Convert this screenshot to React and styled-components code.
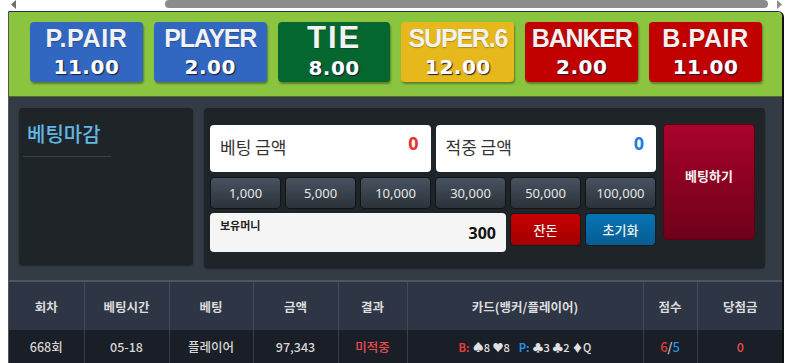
import React from "react";
import styled, { createGlobalStyle } from "styled-components";

const GlobalStyle = createGlobalStyle`
	html, body {
		margin: 0;
		padding: 0;
		background: #fff;
		font-family: "Noto Sans CJK KR", "Noto Sans", sans-serif;
	}
	* { box-sizing: border-box; }
`;

const bets = [
	{ label: "P.PAIR", odds: "11.00", color: "#3166c1", wide: true },
	{ label: "PLAYER", odds: "2.00", color: "#3166c1" },
	{ label: "TIE", odds: "8.00", color: "#04672f", big: true },
	{ label: "SUPER.6", odds: "12.00", color: "#e7b81b" },
	{ label: "BANKER", odds: "2.00", color: "#c10000" },
	{ label: "B.PAIR", odds: "11.00", color: "#c10000", wide: true },
];

const chips = ["1,000", "5,000", "10,000", "30,000", "50,000", "100,000"];

const columns = [
	{ title: "회차", width: 75 },
	{ title: "베팅시간", width: 85 },
	{ title: "베팅", width: 84 },
	{ title: "금액", width: 85 },
	{ title: "결과", width: 69 },
	{ title: "카드(뱅커/플레이어)", width: 236 },
	{ title: "점수", width: 54 },
	{ title: "당첨금", width: 86 },
];

function App() {
	return (
		<>
			<GlobalStyle />
			<ScrollBar>
				<Arrow width="5" height="9" viewBox="0 0 5 9">
					<path d="M5 0 L0 4.5 L5 9 Z" fill="#6f6f6f" />
				</Arrow>
				<Thumb />
				<Arrow width="5" height="9" viewBox="0 0 5 9">
					<path d="M0 0 L5 4.5 L0 9 Z" fill="#8f8f8f" />
				</Arrow>
			</ScrollBar>
			<Frame>
				<BetBar>
					{bets.map((b) => (
						<BetButton key={b.label} $color={b.color}>
							<BetLabel $big={b.big} $wide={b.wide}>
								{b.label}
							</BetLabel>
							<BetOdds>{b.odds}</BetOdds>
						</BetButton>
					))}
				</BetBar>

				<Panel>
					<StatusCard>
						<StatusTitle>베팅마감</StatusTitle>
					</StatusCard>
					<BetCard>
						<Controls>
							<AmountRow>
								<AmountBox>
									<AmountLabel>베팅 금액</AmountLabel>
									<AmountValue $color="#e8312b">0</AmountValue>
								</AmountBox>
								<AmountBox>
									<AmountLabel>적중 금액</AmountLabel>
									<AmountValue $color="#1f7ce0">0</AmountValue>
								</AmountBox>
							</AmountRow>
							<ChipRow>
								{chips.map((c) => (
									<Chip key={c}>{c}</Chip>
								))}
							</ChipRow>
							<MoneyRow>
								<MoneyBox>
									<MoneyLabel>보유머니</MoneyLabel>
									<MoneyValue>300</MoneyValue>
								</MoneyBox>
								<ActionButton $from="#c80000" $to="#a00000">잔돈</ActionButton>
								<ActionButton $from="#0874b3" $to="#055d92">초기화</ActionButton>
							</MoneyRow>
						</Controls>
						<SubmitButton>베팅하기</SubmitButton>
					</BetCard>
				</Panel>

				<Table>
					<thead>
						<tr>
							{columns.map((c) => (
								<Th key={c.title} style={{ width: c.width }}>
									{c.title}
								</Th>
							))}
						</tr>
					</thead>
					<tbody>
						<tr>
							<Td>668회</Td>
							<Td>05-18</Td>
							<Td>플레이어</Td>
							<Td>97,343</Td>
							<Td $color="#ea4b4b">미적중</Td>
							<Td>
								<Cards>
									<Side $color="#e23b3b">B:</Side>
									<span>♠8 ♥8</span>
									<Side $color="#2a8fe0" $gap>P:</Side>
									<span>♣3 ♣2 ♦Q</span>
								</Cards>
							</Td>
							<Td>
								<Score $color="#e23b3b">6</Score>/
								<Score $color="#2a8fe0">5</Score>
							</Td>
							<Td $color="#ea4b4b">0</Td>
						</tr>
					</tbody>
				</Table>
			</Frame>
		</>
	);
}

export default App;

const ScrollBar = styled.div`
	display: flex;
	align-items: flex-start;
	height: 11px;
	padding: 0 18px 0 11px;
`;
const Arrow = styled.svg`
	flex: none;
	display: block;
`;
const Thumb = styled.span`
	height: 8px;
	margin: 0 9px 0 149px;
	flex: 1;
	background: #8c8c8c;
	border-radius: 4px;
`;

const Frame = styled.div`
	margin-left: 8px;
	width: 776px;
	border-top: 1px solid #2a2a55;
	border-left: 1px solid #555;
	border-right: 2px solid #111;
	border-top-right-radius: 6px;
	overflow: hidden;
`;

const BetBar = styled.div`
	display: flex;
	gap: 11px;
	height: 85px;
	padding: 10px 20px 0 21px;
	background: #8bc53f;
	border-bottom: 1px solid #4d6a2b;
`;
const BetButton = styled.div`
	width: 113px;
	height: 60px;
	border-radius: 4px;
	background: ${(p) => p.$color};
	box-shadow: 1px 2px 2px rgba(0, 0, 0, 0.35);
	display: flex;
	flex-direction: column;
	align-items: center;
	color: #fff;
`;
const BetLabel = styled.div`
	font-family: "Liberation Sans", Arial, sans-serif;
	font-weight: bold;
	font-size: ${(p) => (p.$big ? "31px" : "25px")};
	letter-spacing: ${(p) => (p.$big ? "2px" : p.$wide ? "0.6px" : "-1.2px")};
	line-height: ${(p) => (p.$big ? "32px" : "30px")};
	margin-top: ${(p) => (p.$big ? "0" : "1px")};
	color: #f2f2f2;
	text-shadow: 0 1px 1px rgba(0, 0, 0, 0.25);
`;
const BetOdds = styled.div`
	font-family: "DejaVu Sans", Verdana, sans-serif;
	font-weight: bold;
	font-size: 20px;
	line-height: 24px;
	letter-spacing: 0.5px;
	margin-top: 2px;
	color: #fff;
	text-shadow: 1px 1px 1px #1a1a3a;
`;

const Panel = styled.div`
	display: flex;
	gap: 11px;
	height: 183px;
	padding: 11px 17px 0 10px;
	background: #333c45;
`;
const StatusCard = styled.div`
	width: 175px;
	height: 157px;
	border-radius: 4px;
	background: #1f2428;
	box-shadow: 0 1px 2px rgba(0, 0, 0, 0.4);
	padding: 11px 0 0 4px;
`;
const StatusTitle = styled.div`
	width: 88px;
	padding: 0 4px 7px;
	border-bottom: 1px solid #3a4249;
	font-size: 20px;
	line-height: 30px;
	font-weight: 500;
	color: #62b7e3;
`;
const BetCard = styled.div`
	width: 562px;
	height: 160px;
	border-radius: 4px;
	background: #1f2428;
	box-shadow: 0 1px 2px rgba(0, 0, 0, 0.4);
	padding: 16px 10px 0 6px;
	display: flex;
	gap: 7px;
`;
const Controls = styled.div`
	width: 446px;
	display: flex;
	flex-direction: column;
`;
const AmountRow = styled.div`
	display: flex;
	gap: 5px;
	margin-top: 1px;
`;
const AmountBox = styled.div`
	flex: 1;
	height: 47px;
	border-radius: 4px;
	background: #fff;
	display: flex;
	align-items: center;
	justify-content: space-between;
	padding: 0 12px 4px 10px;
`;
const AmountLabel = styled.span`
	font-size: 17px;
	color: #333;
`;
const AmountValue = styled.span`
	font-family: "Noto Sans", sans-serif;
	font-weight: bold;
	font-size: 18px;
	color: ${(p) => p.$color};
	margin-top: -8px;
`;
const ChipRow = styled.div`
	display: grid;
	grid-template-columns: repeat(6, 1fr);
	gap: 4px;
	margin-top: 5px;
`;
const Chip = styled.div`
	height: 32px;
	border-radius: 4px;
	border: 1px solid #111518;
	background: linear-gradient(#485360, #2b3239);
	color: #e6e6e6;
	font-family: "Noto Sans", sans-serif;
	font-size: 13px;
	display: flex;
	align-items: center;
	justify-content: center;
`;
const MoneyRow = styled.div`
	display: grid;
	grid-template-columns: 296px 71px 71px;
	gap: 4px;
	margin-top: 4px;
	align-items: start;
`;
const MoneyBox = styled.div`
	height: 39px;
	border-radius: 4px;
	background: #f5f5f5;
	display: flex;
	justify-content: space-between;
	padding: 2px 10px 0 10px;
`;
const MoneyLabel = styled.span`
	font-size: 11px;
	font-weight: bold;
	color: #222;
	line-height: 20px;
`;
const MoneyValue = styled.span`
	font-family: "Noto Sans", sans-serif;
	font-size: 16px;
	font-weight: bold;
	color: #111;
	align-self: center;
	margin-top: -2px;
`;
const ActionButton = styled.div`
	height: 33px;
	border-radius: 4px;
	border: 1px solid #15191c;
	background: linear-gradient(${(p) => p.$from}, ${(p) => p.$to});
	color: #f2f2f2;
	font-size: 13px;
	font-weight: 500;
	display: flex;
	align-items: center;
	justify-content: center;
`;
const SubmitButton = styled.div`
	width: 92px;
	height: 116px;
	border-radius: 4px;
	border: 1px solid #5b0012;
	background: linear-gradient(#a9032b, #6e0019);
	color: #f3f3f3;
	font-size: 13px;
	font-weight: bold;
	display: flex;
	align-items: center;
	justify-content: center;
	padding-bottom: 14px;
`;

const Table = styled.table`
	width: 100%;
	border-collapse: collapse;
	table-layout: fixed;
	border-top: 2px solid #4b5563;
`;
const Th = styled.th`
	height: 49px;
	background: #2e3646;
	border-right: 1px solid #424b5b;
	color: #dcdcdc;
	font-size: 12.5px;
	font-weight: bold;
	text-align: center;
	&:last-child {
		border-right: none;
	}
`;
const Td = styled.td`
	height: 34px;
	background: #1a1e27;
	border-right: 1px solid #363e4c;
	color: ${(p) => p.$color || "#d6d6d6"};
	font-size: 12.5px;
	font-weight: 500;
	text-align: center;
	padding: 0;
	padding-bottom: 2px;
	&:last-child {
		border-right: none;
	}
`;
const Cards = styled.span`
	font-size: 11px;
	color: #e0e0e0;
`;
const Side = styled.span`
	font-weight: bold;
	color: ${(p) => p.$color};
	margin-left: ${(p) => (p.$gap ? "9px" : "0")};
	margin-right: 3px;
`;
const Score = styled.span`
	color: ${(p) => p.$color};
	font-size: 13px;
`;
